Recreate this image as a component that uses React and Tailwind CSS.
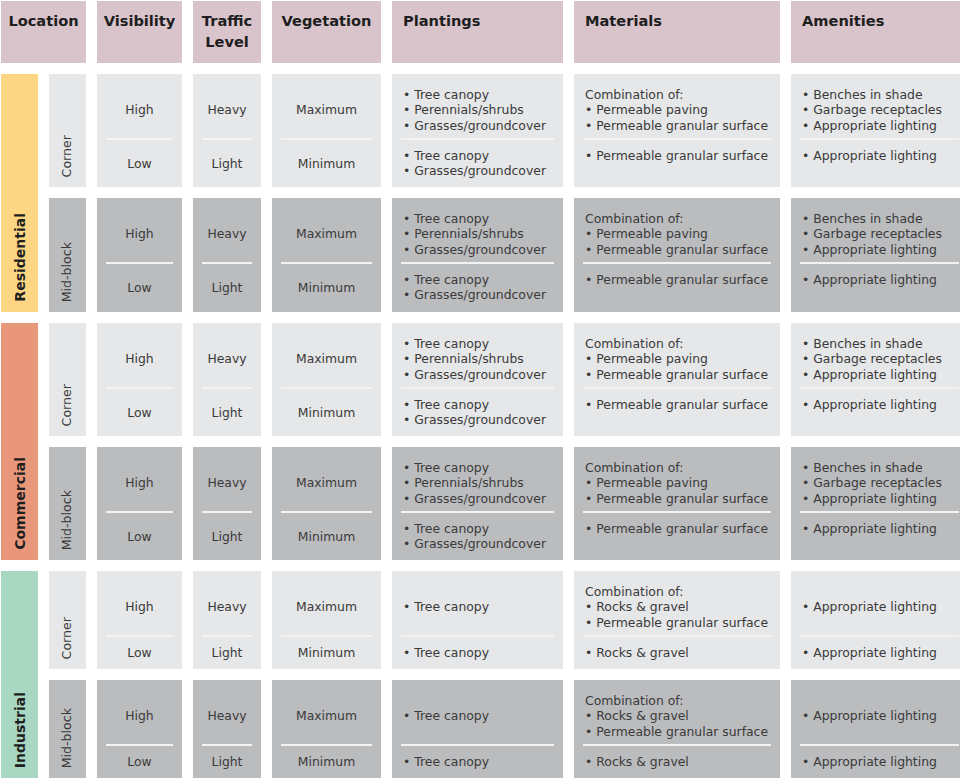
import React from "react";

const LIGHT = "bg-[#e6e7e8]";
const DARK = "bg-[#bbbcbe]";

const plantFull = ["Tree canopy", "Perennials/shrubs", "Grasses/groundcover"];
const plantMin = ["Tree canopy", "Grasses/groundcover"];
const matFull = ["Permeable paving", "Permeable granular surface"];
const matMin = ["Permeable granular surface"];
const amenFull = ["Benches in shade", "Garbage receptacles", "Appropriate lighting"];
const amenMin = ["Appropriate lighting"];

const urban = {
  plantTop: plantFull,
  plantBot: plantMin,
  matTop: matFull,
  matBot: matMin,
  amenTop: amenFull,
  amenBot: amenMin,
};

const industrial = {
  plantTop: ["Tree canopy"],
  plantBot: ["Tree canopy"],
  matTop: ["Rocks & gravel", "Permeable granular surface"],
  matBot: ["Rocks & gravel"],
  amenTop: ["Appropriate lighting"],
  amenBot: ["Appropriate lighting"],
};

const groups = [
  {
    name: "Residential",
    color: "bg-[#fdd684]",
    rows: [
      { label: "Corner", tone: LIGHT, data: urban },
      { label: "Mid-block", tone: DARK, data: urban },
    ],
  },
  {
    name: "Commercial",
    color: "bg-[#e9977b]",
    rows: [
      { label: "Corner", tone: LIGHT, data: urban },
      { label: "Mid-block", tone: DARK, data: urban },
    ],
  },
  {
    name: "Industrial",
    color: "bg-[#a9d8c2]",
    rows: [
      { label: "Corner", tone: LIGHT, data: industrial },
      { label: "Mid-block", tone: DARK, data: industrial },
    ],
  },
];

function Divider() {
  return <div className="h-[2px] mx-[9px] bg-[#f3f3f3] shrink-0" />;
}

function CenterCell({ tone, top, bottom }) {
  return (
    <div className={`${tone} flex flex-col`}>
      <div className="h-[64px] pt-[8px] flex items-center justify-center shrink-0">
        {top}
      </div>
      <Divider />
      <div className="flex-1 flex items-center justify-center">{bottom}</div>
    </div>
  );
}

function Bullets({ items }) {
  return items.map((t) => <div key={t}>{"\u2022 " + t}</div>);
}

function ListCell({ tone, heading, top, bottom }) {
  return (
    <div className={`${tone} flex flex-col`}>
      <div className="h-[64px] pt-[8px] pl-[11px] flex flex-col justify-center shrink-0">
        {heading && <div>{heading}</div>}
        <Bullets items={top} />
      </div>
      <Divider />
      <div className="flex-1 pt-[7.5px] pl-[11px]">
        <Bullets items={bottom} />
      </div>
    </div>
  );
}

function Header({ children, center, span }) {
  return (
    <div
      className={`bg-[#d9c4cc] pt-[9px] font-bold text-[14.6px] leading-[21px] text-[#1e1e1e] ${
        center ? "text-center" : "pl-[11px]"
      } ${span ? "col-span-2" : ""}`}
    >
      {children}
    </div>
  );
}

export default function App() {
  return (
    <div
      className="w-[960px] h-[779px] overflow-hidden bg-white pt-[1px] pl-[1px]"
      style={{ fontFamily: '"DejaVu Sans", "Open Sans", sans-serif' }}
    >
      <div className="grid grid-cols-[37px_37px_85px_68px_109px_171px_206px_177px] grid-rows-[62px_113px_114px_113px_113px_98px_98px] gap-[11px] text-[12.4px] leading-[15.5px] text-[#3a3a3a]">
        <Header center span>
          Location
        </Header>
        <Header center>Visibility</Header>
        <Header center>
          Traffic
          <br />
          Level
        </Header>
        <Header center>Vegetation</Header>
        <Header>Plantings</Header>
        <Header>Materials</Header>
        <Header>Amenities</Header>

        {groups.map((g) =>
          g.rows.map((r, i) => (
            <React.Fragment key={g.name + r.label}>
              {i === 0 && (
                <div
                  className={`${g.color} row-span-2 flex items-end justify-center pb-[10px]`}
                >
                  <span className="[writing-mode:vertical-rl] rotate-180 font-bold text-[14px] leading-none text-[#1e1e1e]">
                    {g.name}
                  </span>
                </div>
              )}
              <div className={`${r.tone} flex items-end justify-center pb-[10px]`}>
                <span className="[writing-mode:vertical-rl] rotate-180 text-[12.6px] leading-none text-[#3a3a3a]">
                  {r.label}
                </span>
              </div>
              <CenterCell tone={r.tone} top="High" bottom="Low" />
              <CenterCell tone={r.tone} top="Heavy" bottom="Light" />
              <CenterCell tone={r.tone} top="Maximum" bottom="Minimum" />
              <ListCell tone={r.tone} top={r.data.plantTop} bottom={r.data.plantBot} />
              <ListCell
                tone={r.tone}
                heading="Combination of:"
                top={r.data.matTop}
                bottom={r.data.matBot}
              />
              <ListCell tone={r.tone} top={r.data.amenTop} bottom={r.data.amenBot} />
            </React.Fragment>
          ))
        )}
      </div>
    </div>
  );
}
